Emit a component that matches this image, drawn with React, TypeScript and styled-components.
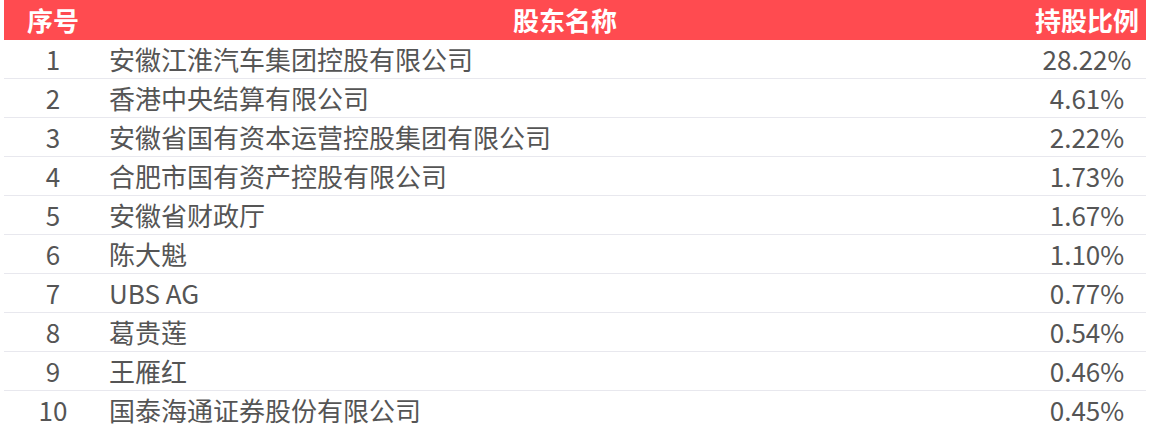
import styled, { createGlobalStyle } from 'styled-components';

const GlobalStyle = createGlobalStyle`
  html, body {
    margin: 0;
    padding: 0;
    background: #fff;
  }
  body {
    font-family: "Noto Sans CJK SC", "Noto Sans", sans-serif;
  }
`;

const Wrapper = styled.div`
  padding: 0 4px;
  width: 1150px;
  box-sizing: border-box;
`;

const Table = styled.div`
  display: grid;
  grid-template-columns: 98px 1fr 118px;
`;

const HeadCell = styled.div<{ $align?: string }>`
  height: 40px;
  background: #ff4b50;
  color: #fff;
  font-size: 26px;
  font-weight: 700;
  line-height: 40px;
  text-align: ${p => p.$align || 'center'};
  white-space: nowrap;
`;

const Cell = styled.div<{ $align?: string; $last?: boolean }>`
  height: 39px;
  box-sizing: border-box;
  border-bottom: ${p => (p.$last ? 'none' : '1px solid #e8e8ee')};
  color: #555;
  font-size: 26px;
  line-height: 38px;
  text-align: ${p => p.$align || 'center'};
  padding-left: ${p => (p.$align === 'left' ? '7px' : '0')};
  white-space: nowrap;
`;

const rows = [
  ['1', '安徽江淮汽车集团控股有限公司', '28.22%'],
  ['2', '香港中央结算有限公司', '4.61%'],
  ['3', '安徽省国有资本运营控股集团有限公司', '2.22%'],
  ['4', '合肥市国有资产控股有限公司', '1.73%'],
  ['5', '安徽省财政厅', '1.67%'],
  ['6', '陈大魁', '1.10%'],
  ['7', 'UBS AG', '0.77%'],
  ['8', '葛贵莲', '0.54%'],
  ['9', '王雁红', '0.46%'],
  ['10', '国泰海通证券股份有限公司', '0.45%'],
];

export default function App() {
  return (
    <Wrapper>
      <GlobalStyle />
      <Table>
        <HeadCell>序号</HeadCell>
        <HeadCell>股东名称</HeadCell>
        <HeadCell>持股比例</HeadCell>
        {rows.map((r, i) => {
          const last = i === rows.length - 1;
          return [
            <Cell key={`n${i}`} $last={last}>{r[0]}</Cell>,
            <Cell key={`s${i}`} $align="left" $last={last}>{r[1]}</Cell>,
            <Cell key={`p${i}`} $last={last}>{r[2]}</Cell>,
          ];
        })}
      </Table>
    </Wrapper>
  );
}
